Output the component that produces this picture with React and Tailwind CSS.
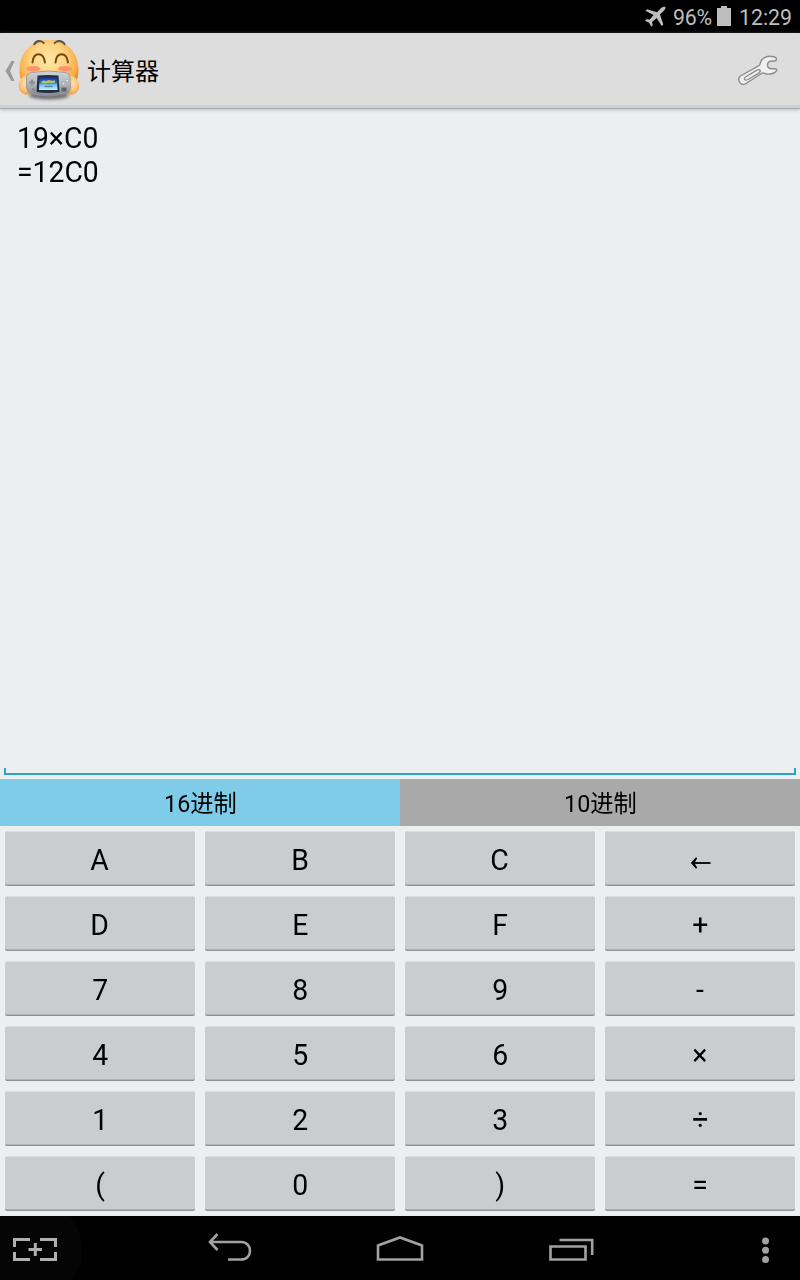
import React from "react";

const KEYS = [
  "A", "B", "C", "←",
  "D", "E", "F", "+",
  "7", "8", "9", "-",
  "4", "5", "6", "×",
  "1", "2", "3", "÷",
  "(", "0", ")", "=",
];

function StatusBar() {
  return (
    <div className="flex h-[33px] items-center bg-black pl-[644px] text-[21.3px] text-[#bebebe]">
      <svg className="h-[22px] w-[22px] shrink-0" viewBox="0 0 22 22" fill="#bebebe">
        <path d="M21.3 1c.6.9-.2 2.4-1.200 3.500L16 8.500l3.300 10-1.600 1.400-5-7.800-4.600 4 .6 3.200-1.400 1.400-2.200-4L1 14.700l1.400-1.500 3.300.4 3.900-4.600L1.500 4.800 3 3.200l10 3 3.800-3.900c1.100-1.100 3.400-1.900 4.500-1.300z" />
      </svg>
      <span className="ml-[7px] w-[41px] whitespace-nowrap pt-[3px] leading-none tracking-[-0.2px]">96%</span>
      <svg className="ml-[3px] h-[22px] w-[14px] shrink-0" viewBox="0 0 14 22" fill="#bebebe">
        <path d="M4 0h6v2h4v18H0V2h4z" />
      </svg>
      <span className="ml-[8px] whitespace-nowrap pt-[3px] leading-none">12:29</span>
    </div>
  );
}

function FaceIcon() {
  return (
    <svg className="h-[66px] w-[64px]" viewBox="0 0 64 66">
      <defs>
        <radialGradient id="face" cx=".48" cy=".38" r=".62">
          <stop offset="0" stopColor="#ffe9a6" />
          <stop offset=".5" stopColor="#ffd280" />
          <stop offset=".8" stopColor="#f7ae48" />
          <stop offset="1" stopColor="#cf7f28" />
        </radialGradient>
        <radialGradient id="hand" cx=".5" cy=".4" r=".65">
          <stop offset="0" stopColor="#ffdfa6" />
          <stop offset=".6" stopColor="#fcc478" />
          <stop offset="1" stopColor="#e8923a" />
        </radialGradient>
        <linearGradient id="body" x2="0" y2="1">
          <stop offset="0" stopColor="#d3d6d8" />
          <stop offset=".5" stopColor="#b2b6ba" />
          <stop offset="1" stopColor="#858a90" />
        </linearGradient>
        <linearGradient id="screen" x2="0" y2="1">
          <stop offset="0" stopColor="#18359a" />
          <stop offset=".4" stopColor="#2674c8" />
          <stop offset=".6" stopColor="#76c5ea" />
          <stop offset="1" stopColor="#c6effa" />
        </linearGradient>
        <filter id="soft" x="-20%" y="-50%" width="140%" height="200%">
          <feGaussianBlur stdDeviation="1.6" />
        </filter>
      </defs>
      <ellipse cx="32" cy="59.500" rx="20" ry="4" fill="#444" opacity=".7" filter="url(#soft)" />
      <path d="M16 10c1-6 9-8 12-2zM36 8c3-6 11-4 12 2z" fill="#8d8d8d" stroke="#606060" strokeWidth="1" />
      <path d="M32 3.800C14 3.800 2.500 17 2.500 34c0 17 11.500 24.500 29.500 24.500S61.500 51 61.500 34C61.500 17 50 3.800 32 3.800z" fill="url(#face)" />
      <path d="M17 9c2-4.500 7-5 10.500-1.500M37 7.500C40.500 4 46 4.500 48 9" fill="none" stroke="#5c5347" strokeWidth="1.800" />
      <path d="M15.500 26.500C16.500 15.500 26.500 15.500 28 26.500M38.500 26.500C39.500 15.500 49.500 15.500 51 26.500" fill="none" stroke="#774911" strokeWidth="2" strokeLinecap="round" />
      <ellipse cx="16.500" cy="32.800" rx="7" ry="2.800" fill="#ff8c6b" opacity=".9" />
      <ellipse cx="48" cy="32.800" rx="7" ry="2.800" fill="#ff8c6b" opacity=".9" />
      <path d="M11 39C4 40 1 46 2 52c2 7 9 8 13 5z" fill="url(#hand)" />
      <path d="M52 39c7 1 11 7 10 13-2 7-9 8-13 5z" fill="url(#hand)" />
      <path d="M14 36.500Q31 33.500 49 36.500 52.500 37.500 53 41L53.500 51Q53.500 57.500 46 58.500 31 61.500 17 59 10 57.500 9.500 51V41Q10 37.500 14 36.500Z" fill="url(#body)" stroke="#858a90" strokeWidth=".7" />
      <path d="M20.500 39.500Q31 38.500 41.500 39.500L42.500 56Q31 58 19.500 56Z" fill="#262e43" />
      <path d="M22.500 41.500H40L40.500 54H22z" fill="url(#screen)" />
      <path d="M24.500 45.500l2-1 3 .5 2-1 3 .8 3.500-.3v2.200l-4 .3-3-.2-3 .6-3.500-.3z" fill="#bfc45a" />
      <path d="M27.500 50.500h8" stroke="#517f91" strokeWidth="1.200" />
      <path d="M12 46.500h6M15 43.500v6" stroke="#898f97" strokeWidth="2" />
      <circle cx="16.500" cy="53.500" r="1.500" fill="#7e848b" />
      <circle cx="46.500" cy="47.500" r="1.500" fill="#dfe3e6" stroke="#888e95" strokeWidth=".5" />
      <circle cx="50" cy="44.500" r="1.500" fill="#dfe3e6" stroke="#888e95" strokeWidth=".5" />
      <path d="M44.500 51.500h5v4h-5z" fill="#5d636a" />
    </svg>
  );
}

function ActionBar() {
  return (
    <div className="flex h-[75px] items-center border-b-[3px] border-[#cfcfcf] bg-[#dddddd] shadow-[0_1px_0_#a7adae,0_2px_4px_#bac0c1]">
      <svg className="ml-[5px] mt-[3px] h-[20px] w-[10px]" viewBox="0 0 10 20" fill="#999">
        <path d="M6.500 0H9.500L5 10 9.500 20H6.500L.500 10z" />
      </svg>
      <div className="ml-[2px]">
        <FaceIcon />
      </div>
      <span className="ml-[6px] mt-[6px] text-[24px] leading-none text-black">计算器</span>
      <svg className="ml-auto mr-[21px] mt-[2px] h-[32px] w-[42px]" viewBox="0 0 42 32" fill="#f0f0f0" stroke="#8c8c8c" strokeWidth="1.400" strokeLinejoin="round">
        <path d="M3.500 22 21.500 11.800Q23 11 23.300 9.300C24.500 4 30 1 37 2.800Q39.500 3.500 39.500 5T38 7H34.500Q30.500 7.500 30.500 11T34.500 14.800H38Q40 15 39.700 16.500C39 18.500 33 21.500 27.500 19.300Q26 18.700 24.500 19.500L9 29.500Q6 31.500 3.500 29.200 0 25 3.500 22Z" />
        <path d="M8.500 23 19.500 16.300Q22 15 23 16.300 23.800 18 21.500 19.300L11 25.500Q8.500 26.800 7.500 25.300 6.800 24 8.500 23Z" />
      </svg>
    </div>
  );
}

function Editor() {
  return (
    <div className="flex h-[671px] flex-col px-[4px] pt-[13px]">
      <div className="ml-[13px] flex-1 origin-left scale-x-[.967] text-[29.3px] leading-[34px] text-black">
        <div>19×C0</div>
        <div>=12C0</div>
      </div>
      <div className="mb-[4px] h-[7px] border-x-2 border-b-2 border-[#2ba1cf]" />
    </div>
  );
}

function Keypad() {
  return (
    <div className="grid h-[390px] grid-cols-4 grid-rows-6">
      {KEYS.map((key) => (
        <div key={key} className="px-[5px] pb-[5px] pt-[6px]">
          <button className="flex h-[54px] w-full items-center justify-center rounded-[2px] border-b border-[#8f9192] bg-[#cbccce] pt-[4px] text-[29.3px] leading-none text-black shadow-[0_-1px_0_#dadddd,inset_0_-1px_0_#afb1b2]">
            {key === "←" ? (
              <svg className="mt-[4px] h-[14px] w-[22px]" viewBox="0 0 22 14" fill="none" stroke="black" strokeWidth="1.800">
                <path d="M4 7h17.500" />
                <path d="M1.800 7 7 1.200l1.200 1L5.500 7l2.700 4.800-1.200 1z" fill="black" stroke="none" />
              </svg>
            ) : (
              <span className="scale-x-[.97]">{key}</span>
            )}
          </button>
        </div>
      ))}
    </div>
  );
}

function NavBar() {
  return (
    <div className="flex h-[64px] items-center bg-black">
      <svg className="h-[64px] w-[800px]" viewBox="0 0 800 64" fill="none" stroke="#a2a2a2" strokeWidth="3">
        <path d="M0 0H70Q82 16 82 34T71 64H0z" fill="#050505" stroke="none" />
        <path d="M14.500 31V23.500H30M40 23.500H55.500V31M55.500 36V43.500H40M30 43.500H14.500V36M28.500 33.500H42M35.300 27V40" stroke="#b0b0b0" />
        <path d="M210 26H241C253 26 253 43.500 241 43.500H228M217.500 18 210 26l7.500 8" strokeWidth="2.600" />
        <path d="M378 43.500V29.500L400 21.500 422 29.500V43.500z" strokeWidth="2.600" />
        <path d="M550.500 30.500H585.500V43.500H550.500zM559.500 24H592.200V39" strokeWidth="2.600" />
        <g fill="#a2a2a2" stroke="none">
          <circle cx="765.500" cy="25" r="3.500" />
          <circle cx="765.500" cy="34.300" r="3.500" />
          <circle cx="765.500" cy="43.500" r="3.500" />
        </g>
      </svg>
    </div>
  );
}

export default function App() {
  return (
    <div className="h-[1280px] w-[800px] overflow-hidden bg-[#ebeff0] font-['Roboto','Noto_Sans_CJK_SC',sans-serif]">
      <StatusBar />
      <ActionBar />
      <Editor />
      <div className="grid h-[47px] grid-cols-2 text-[24px] leading-none text-black">
        <div className="flex items-center justify-center bg-[#7ecce8] pt-[3px]">
          <span className="scale-x-[.97]">16进制</span>
        </div>
        <div className="flex items-center justify-center bg-[#a9a9a9] pt-[3px]">
          <span className="scale-x-[.97]">10进制</span>
        </div>
      </div>
      <Keypad />
      <NavBar />
    </div>
  );
}
